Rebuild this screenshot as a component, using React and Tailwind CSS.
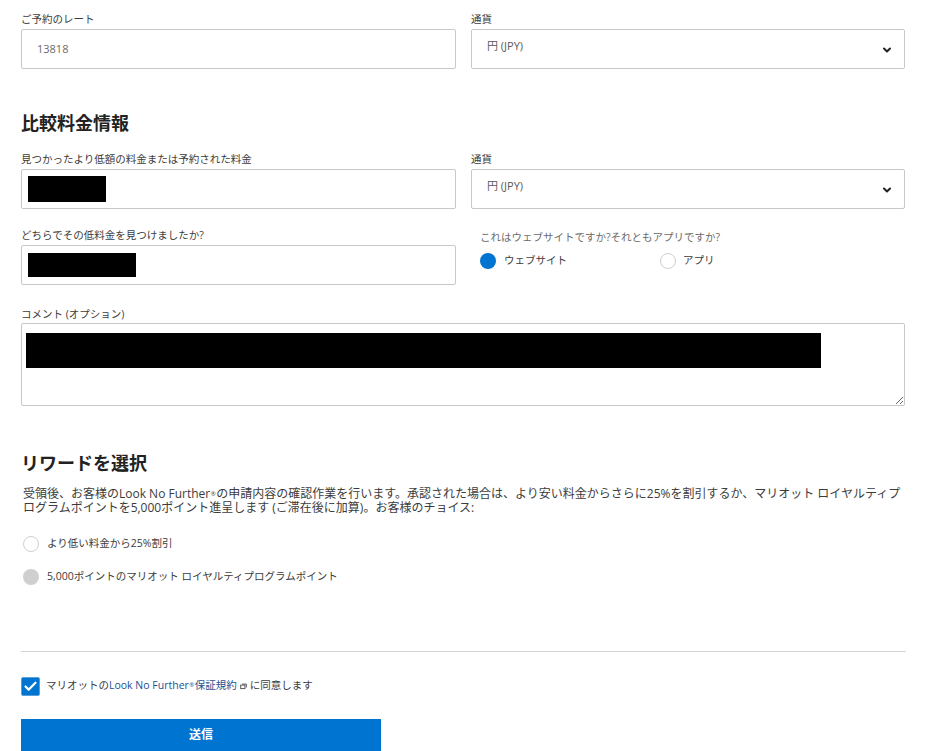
import { ChevronDown, Check } from 'lucide-react';

const fontStack = 'font-["Open_Sans","Noto_Sans_CJK_JP",sans-serif]';

function FieldLabel({ children }) {
  return <p className="h-[20px] text-[10.5px] leading-[20px] text-[#3c3c3c]">{children}</p>;
}

function TextBox({ value, redactWidth, redactHeight }) {
  return (
    <div className="relative flex h-[40px] items-center rounded-[2px] border border-[#c8c8c8] bg-white pl-[15px] text-[11px] text-[#6b6b6b]">
      {value}
      {redactWidth && (
        <div className={`absolute left-[6px] top-1/2 -translate-y-1/2 bg-black ${redactWidth} ${redactHeight}`} />
      )}
    </div>
  );
}

function CurrencySelect() {
  return (
    <div className="flex h-[40px] items-start justify-between rounded-[2px] border border-[#c8c8c8] bg-white pl-[15px] pr-[11px] pt-[8px]">
      <span className="text-[11px] leading-[16px] text-[#5a5a5a]">円 (JPY)</span>
      <ChevronDown size={12} strokeWidth={4} className="mt-[6px] text-[#222]" />
    </div>
  );
}

function Radio({ state }) {
  if (state === 'on') return <span className="h-[16px] w-[16px] rounded-full bg-[#0074d1]" />;
  if (state === 'disabled') return <span className="h-[16px] w-[16px] rounded-full bg-[#cfcfcf]" />;
  return <span className="h-[16px] w-[16px] rounded-full border border-[#d0d0d0] bg-white" />;
}

function Reg() {
  return <span className="inline-block px-[0.5px] align-[2px] text-[6px] leading-none">®</span>;
}

export default function App() {
  return (
    <div className={`h-[751px] overflow-hidden bg-white px-[21px] pt-[9px] ${fontStack}`}>
      <div className="grid w-[884px] grid-cols-[435px_434px] gap-x-[15px]">
        <div>
          <FieldLabel>ご予約のレート</FieldLabel>
          <TextBox value="13818" />
        </div>
        <div>
          <FieldLabel>通貨</FieldLabel>
          <CurrencySelect />
        </div>
      </div>

      <h2 className="mt-[42px] h-[24px] text-[18px] font-bold leading-[24px] text-[#222]">比較料金情報</h2>

      <div className="mt-[14px] grid w-[884px] grid-cols-[435px_434px] gap-x-[15px]">
        <div>
          <FieldLabel>見つかったより低額の料金または予約された料金</FieldLabel>
          <TextBox redactWidth="w-[78px]" redactHeight="h-[26px]" />
        </div>
        <div>
          <FieldLabel>通貨</FieldLabel>
          <CurrencySelect />
        </div>
        <div className="mt-[16px]">
          <FieldLabel>どちらでその低料金を見つけましたか?</FieldLabel>
          <TextBox redactWidth="w-[108px]" redactHeight="h-[24px]" />
        </div>
        <div className="mt-[18px] pl-[9px]">
          <p className="h-[20px] text-[10.5px] leading-[20px] text-[#6b6b6b]">これはウェブサイトですか?それともアプリですか?</p>
          <div className="mt-[6px] flex">
            <label className="flex w-[180px] items-center gap-[8px] text-[10.5px] text-[#3c3c3c]">
              <Radio state="on" />
              ウェブサイト
            </label>
            <label className="flex items-center gap-[7px] text-[10.5px] text-[#3c3c3c]">
              <Radio />
              アプリ
            </label>
          </div>
        </div>
      </div>

      <div className="mt-[19px] w-[884px]">
        <p className="h-[19px] text-[10.5px] leading-[20px] text-[#3c3c3c]">コメント (オプション)</p>
        <div className="relative h-[83px]">
          <textarea className="block h-[83px] w-full rounded-[2px] border border-[#c8c8c8] bg-white" />
          <div className="absolute left-[5px] top-[10px] h-[35px] w-[795px] bg-black" />
        </div>
      </div>

      <h2 className="mt-[45px] h-[24px] text-[18px] font-bold leading-[24px] text-[#222]">リワードを選択</h2>

      <p className="mt-[12px] w-[884px] pl-[2px] text-[12px] leading-[14px] text-[#3c3c3c]">
        受領後、お客様のLook No Further<Reg />の申請内容の確認作業を行います。承認された場合は、より安い料金からさらに25%を割引するか、マリオット ロイヤルティプ<br />ログラムポイントを5,000ポイント進呈します (ご滞在後に加算)。お客様のチョイス:
      </p>

      <div className="mt-[20px] flex h-[18px] items-center gap-[8px] pl-[2px]">
        <Radio />
        <span className="text-[10.5px] text-[#3c3c3c]">より低い料金から25%割引</span>
      </div>
      <div className="mt-[15px] flex h-[18px] items-center gap-[8px] pl-[2px]">
        <Radio state="disabled" />
        <span className="text-[10.5px] text-[#3c3c3c]">5,000ポイントのマリオット ロイヤルティプログラムポイント</span>
      </div>

      <hr className="mt-[65px] w-[885px] border-[#d4d4d4]" />

      <div className="mt-[24px] flex h-[20px] items-center gap-[5px]">
        <span className="flex h-[19px] w-[19px] items-center justify-center rounded-[2px] border border-[#5a9fd8] bg-[#0074d1]">
          <Check size={15} strokeWidth={3.5} className="text-white" />
        </span>
        <span className="pl-[1px] text-[10.5px] text-[#3c3c3c]">
          マリオットの<a className="text-[#24508f]">Look No Further<Reg />保証規約</a>
          <svg viewBox="0 0 10 10" className="mx-[3px] inline h-[7px] w-[7px] text-[#555]" fill="none" stroke="currentColor" strokeWidth="1.4">
            <rect x="1" y="3" width="6" height="5" />
            <path d="M3 1.5h6v5" />
          </svg>
          に同意します
        </span>
      </div>

      <button className="mt-[23px] flex h-[40px] w-[360px] items-start justify-center bg-[#0074d1] pt-[7px] text-[12px] font-bold text-white">送信</button>
    </div>
  );
}
